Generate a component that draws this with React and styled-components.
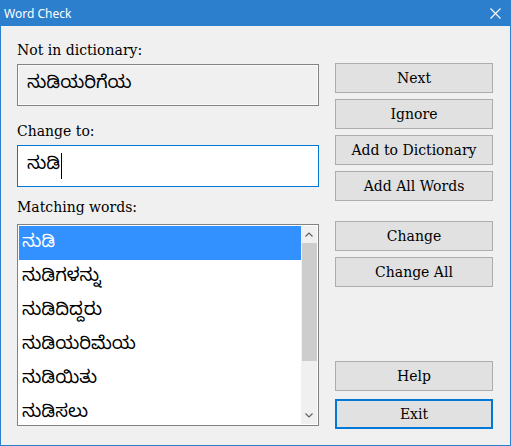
import React from "react";
import styled, { createGlobalStyle } from "styled-components";

const Global = createGlobalStyle`
  html, body { margin: 0; padding: 0; background: #f0f0f0; }
  * { box-sizing: border-box; }
`;

const Window = styled.div`
  width: 511px;
  height: 446px;
  border: 1px solid #2b7fcd;
  border-top: none;
  background: #f0f0f0;
  display: flex;
  flex-direction: column;
  font-family: "DejaVu Serif", Georgia, serif;
  color: #000;
`;

const TitleBar = styled.div`
  height: 26px;
  margin: 0 -1px;
  background: #2b7fcd;
  display: flex;
  align-items: center;
  justify-content: space-between;
  padding: 0 10px 0 4px;
  color: #fff;
  font-family: "Noto Sans", "Open Sans", sans-serif;
  font-size: 12px;
`;

const Body = styled.div`
  flex: 1;
  display: flex;
  gap: 16px;
  padding: 14px 17px 0 16px;
`;

const LeftCol = styled.div`
  width: 302px;
  display: flex;
  flex-direction: column;
`;

const Label = styled.div`
  font-size: 14px;
  line-height: 20px;
  height: 20px;
  margin-top: ${(p) => p.$mt || 0}px;
  margin-bottom: ${(p) => p.$mb || 4}px;
  white-space: nowrap;
`;

const kn = `"Noto Sans Kannada", "Noto Serif Kannada", "Tunga", "Noto Sans", sans-serif`;

const WordBox = styled.div`
  height: 42px;
  border: 1px solid #828282;
  box-shadow: inset 0 0 0 1px #fbfbfb;
  background: #f0f0f0;
  display: flex;
  align-items: center;
  padding-left: 9px;
  font-family: ${kn};
  font-size: 18px;
`;

const InputBox = styled.div`
  height: 42px;
  border: 1px solid #0078d7;
  background: #fff;
  display: flex;
  align-items: center;
  padding-left: 9px;
  font-family: ${kn};
  font-size: 18px;
`;

const Caret = styled.span`
  display: inline-block;
  width: 1px;
  height: 26px;
  background: #000;
  margin-left: 1px;
`;

const ListBox = styled.div`
  height: 202px;
  border: 1px solid #828282;
  background: #fff;
  display: flex;
  padding: 1px;
  overflow: hidden;
`;

const Items = styled.div`
  flex: 1;
  display: flex;
  flex-direction: column;
`;

const Item = styled.div`
  height: 34px;
  flex-shrink: 0;
  display: flex;
  align-items: center;
  padding: 2px 0 0 3px;
  font-family: ${kn};
  font-size: 18px;
  background: ${(p) => (p.$sel ? "#3390ff" : "transparent")};
  color: ${(p) => (p.$sel ? "#fff" : "#000")};
`;

const ScrollBar = styled.div`
  width: 16px;
  background: #f0f0f0;
  display: flex;
  flex-direction: column;
  align-items: center;
`;

const Arrow = styled.div`
  height: 17px;
  width: 16px;
  display: flex;
  align-items: center;
  justify-content: center;
`;

const Thumb = styled.div`
  width: 15px;
  height: 118px;
  background: #cdcdcd;
`;

const Spacer = styled.div`
  flex: 1;
`;

const RightCol = styled.div`
  width: 158px;
  display: flex;
  flex-direction: column;
  padding-top: 23px;
`;

const Button = styled.div`
  height: 30px;
  flex-shrink: 0;
  margin-top: ${(p) => p.$mt || 0}px;
  background: #e1e1e1;
  border: ${(p) => (p.$def ? "2px solid #0078d7" : "1px solid #adadad")};
  display: flex;
  align-items: center;
  justify-content: center;
  font-size: 14px;
  white-space: nowrap;
`;

const Chevron = ({ up }) => (
  <svg width="8" height="5" viewBox="0 0 8 5">
    <path
      d={up ? "M0.5 4.5 L4 1 L7.5 4.5" : "M0.5 0.5 L4 4 L7.5 0.5"}
      fill="none"
      stroke="#606060"
      strokeWidth="1.2"
    />
  </svg>
);

const words = ["ನುಡಿ", "ನುಡಿಗಳನ್ನು", "ನುಡಿದಿದ್ದರು", "ನುಡಿಯರಿಮೆಯ", "ನುಡಿಯಿತು", "ನುಡಿಸಲು"];

export default function App() {
  return (
    <>
      <Global />
      <Window>
        <TitleBar>
          <span>Word Check</span>
          <svg width="11" height="11" viewBox="0 0 11 11">
            <path d="M0.5 0.5 L10.5 10.5 M10.5 0.5 L0.5 10.5" stroke="#fff" strokeWidth="1.1" />
          </svg>
        </TitleBar>
        <Body>
          <LeftCol>
            <Label>Not in dictionary:</Label>
            <WordBox>ನುಡಿಯರಿಗೆಯ</WordBox>
            <Label $mt={15}>Change to:</Label>
            <InputBox>
              ನುಡಿ
              <Caret />
            </InputBox>
            <Label $mt={10} $mb={7}>Matching words:</Label>
            <ListBox>
              <Items>
                {words.map((w, i) => (
                  <Item key={w} $sel={i === 0}>
                    {w}
                  </Item>
                ))}
              </Items>
              <ScrollBar>
                <Arrow>
                  <Chevron up />
                </Arrow>
                <Thumb />
                <Spacer />
                <Arrow>
                  <Chevron />
                </Arrow>
              </ScrollBar>
            </ListBox>
          </LeftCol>
          <RightCol>
            <Button>Next</Button>
            <Button $mt={6}>Ignore</Button>
            <Button $mt={6}>Add to Dictionary</Button>
            <Button $mt={6}>Add All Words</Button>
            <Button $mt={20}>Change</Button>
            <Button $mt={6}>Change All</Button>
            <Button $mt={74}>Help</Button>
            <Button $mt={8} $def>Exit</Button>
          </RightCol>
        </Body>
      </Window>
    </>
  );
}
